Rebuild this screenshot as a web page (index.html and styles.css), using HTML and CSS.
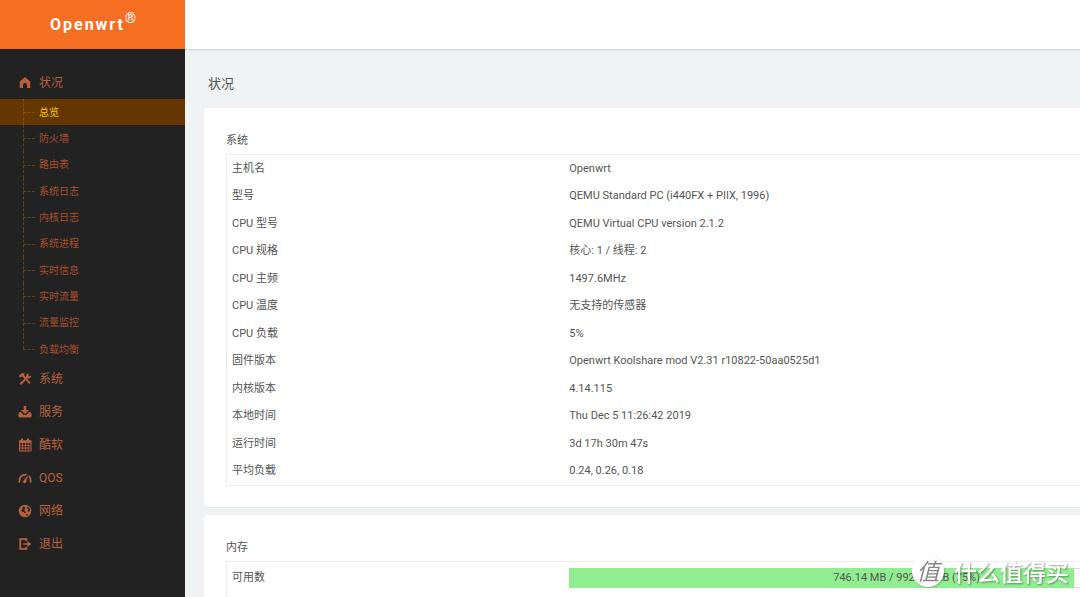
FILE: index.html
```html
<!DOCTYPE html>
<html lang="zh-CN">
<head>
<meta charset="utf-8">
<title>Openwrt - 总览</title>
<link rel="stylesheet" href="styles.css">
</head>
<body>
<div class="page">
  <aside class="sidebar">
    <a class="brand" href="#"><span>Openwrt</span><sup>®</sup></a>
    <nav class="nav">
      <a class="item" href="#"><svg viewBox="0 0 14 14"><path d="M7 1 12.200 5.600V12H9V9a2 2 0 0 0-4 0v3H1.800V5.600z"/></svg>状况</a>
      <ul class="sub">
        <li class="active"><a href="#">总览</a></li>
        <li><a href="#">防火墙</a></li>
        <li><a href="#">路由表</a></li>
        <li><a href="#">系统日志</a></li>
        <li><a href="#">内核日志</a></li>
        <li><a href="#">系统进程</a></li>
        <li><a href="#">实时信息</a></li>
        <li><a href="#">实时流量</a></li>
        <li><a href="#">流量监控</a></li>
        <li><a href="#">负载均衡</a></li>
      </ul>
      <a class="item" href="#"><svg viewBox="0 0 14 14"><path d="M.6 4.300 3.600 1.200h3.600L5.900 2.700l6.700 8.300-1.200 1.100L4.500 4.400 2.400 5.600z"/><path d="m1.500 11.600 6.700-6.400c-.5-1.900.7-3.700 2.700-3.600L10.200 3.200l1 1.200 2-.9c.2 2-1.500 3.300-3.500 2.800L3 13z"/></svg>系统</a>
      <a class="item" href="#"><svg viewBox="0 0 14 14"><path d="M5.700 1h2.600v4H11L7 9 3 5h2.700z"/><path d="M.5 8.500 2 7h1.200l2.100 2.700h3.400L10.800 7H12l1.500 1.500v3.200l-.8.800H1.300l-.8-.8z"/></svg>服务</a>
      <a class="item" href="#"><svg viewBox="0 0 14 14"><path fill-rule="evenodd" d="M3 .5h2v1.700h4V.5h2v1.700h2.500v11.300H1V2.200h2zM2.200 5v1.900h2V5zm2.900 0v1.900h1.800V5zm2.700 0v1.900h1.800V5zm2.700 0v1.900h2V5zM2.200 7.800v1.800h2V7.800zm2.900 0v1.800h1.800V7.800zm2.700 0v1.800h1.800V7.800zm2.700 0v1.800h2V7.800zM2.200 10.500v1.900h2v-1.900zm2.900 0v1.900h1.800v-1.900zm2.700 0v1.900h1.800v-1.900zm2.700 0v1.900h2v-1.900z"/></svg>酷软</a>
      <a class="item" href="#"><svg viewBox="0 0 14 14"><path fill="none" stroke="currentColor" stroke-width="1.800" d="M1.400 11.500C.8 6.500 3.500 3.400 8.500 3.600M11 5c1.600 1.800 1.900 4 1.500 6.500"/><path d="m10.300 3.800-2.100 7a1.600 1.600 0 1 1-2.500-1.400z"/></svg>QOS</a>
      <a class="item" href="#"><svg viewBox="0 0 14 14"><path fill-rule="evenodd" d="M7 .7a6.300 6.300 0 1 1 0 12.600A6.300 6.300 0 0 1 7 .7zM6 2.200 4.200 3.600l.6 1.600-1.600 1 .8 1.600 2 .2.600 1.600L8 8.200 6.600 6.600l-.8-.8 1.700-1.400zM9.600 2.600 8.800 4l1.400 1-.4 2 1.400 1 .9-1.700-.6-2.300zM8.500 10.500 7.800 12l1.700-.6.600-1.400z"/></svg>网络</a>
      <a class="item" href="#"><svg viewBox="0 0 14 14"><path fill="none" stroke="currentColor" stroke-width="1.800" d="M8.500 4.200V2.200H2.200v9.600h6.300V9.800"/><path d="M5.200 6.200h4.300V4L13.300 7 9.500 10V7.800H5.200z"/></svg>退出</a>
    </nav>
  </aside>
  <main class="main">
    <header class="topbar"></header>
    <div class="content">
      <h1 class="title">状况</h1>
      <section class="card">
        <h2 class="legend">系统</h2>
        <table class="info">
          <tr><th>主机名</th><td>Openwrt</td></tr>
          <tr><th>型号</th><td>QEMU Standard PC (i440FX + PIIX, 1996)</td></tr>
          <tr><th>CPU 型号</th><td>QEMU Virtual CPU version 2.1.2</td></tr>
          <tr><th>CPU 规格</th><td>核心: 1 / 线程: 2</td></tr>
          <tr><th>CPU 主频</th><td>1497.6MHz</td></tr>
          <tr><th>CPU 温度</th><td>无支持的传感器</td></tr>
          <tr><th>CPU 负载</th><td>5%</td></tr>
          <tr><th>固件版本</th><td>Openwrt Koolshare mod V2.31 r10822-50aa0525d1</td></tr>
          <tr><th>内核版本</th><td>4.14.115</td></tr>
          <tr><th>本地时间</th><td>Thu Dec 5 11:26:42 2019</td></tr>
          <tr><th>运行时间</th><td>3d 17h 30m 47s</td></tr>
          <tr><th>平均负载</th><td>0.24, 0.26, 0.18</td></tr>
        </table>
      </section>
      <section class="card">
        <h2 class="legend">内存</h2>
        <table class="info memory">
          <tr><th>可用数</th><td><div class="meter"><div class="fill" style="width:75%"></div><span class="value">746.14 MB / 992.45 MB (75%)</span></div></td></tr>
          <tr><th></th><td></td></tr>
        </table>
      </section>
    </div>
  </main>
</div>
<div class="watermark"><span class="seal">值</span><span>什么值得买</span></div>
</body>
</html>
```
FILE: styles.css
```css
* { box-sizing: border-box; }
html, body { height: 100%; }
body {
  margin: 0;
  overflow: hidden;
  background: #eff3f4;
  color: #555;
  font: 11px/20px Roboto, "Noto Sans CJK SC", sans-serif;
}
a { color: inherit; text-decoration: none; }
.page { display: flex; height: 100vh; overflow: hidden; }

.sidebar { flex: 0 0 185px; background: #222; color: #b5613e; }
.brand {
  display: flex;
  align-items: center;
  justify-content: center;
  height: 49px;
  padding-left: 3px;
  background: #f66e22;
  color: #fff;
  font-size: 16px;
  font-weight: 700;
  letter-spacing: 2px;
}
.brand sup { padding-bottom: 14px; font-size: 14px; font-weight: 400; line-height: 14px; vertical-align: baseline; }
.nav { padding-top: 17px; }
.item { display: flex; align-items: center; gap: 7px; height: 33px; padding-left: 18px; font-size: 12px; }
.item svg { width: 14px; height: 14px; fill: currentColor; }
.sub { margin: 0; padding: 0; list-style: none; font-size: 10px; color: #a74f2d; }
.sub li { position: relative; height: 26px; }
.sub li:nth-child(3n) { height: 27px; }
.sub a { display: flex; align-items: center; height: 100%; padding: 1px 0 0 39px; }
.sub .active { background: #663600; color: #f3cd00; }
.sub li::before {
  content: "";
  position: absolute;
  top: 0;
  bottom: 0;
  left: 23px;
  border-left: 1px dashed #68400f;
}
.sub li:last-child::before { bottom: 50%; }
.sub li::after {
  content: "";
  position: absolute;
  top: 50%;
  left: 23px;
  width: 12px;
  border-top: 1px dashed #68400f;
}
.sub .active::before, .sub .active::after { border-color: #875008; }

.main { flex: 1; min-width: 0; overflow: hidden; }
.topbar { position: relative; height: 49px; background: #fff; box-shadow: 0 1px 2px rgba(0, 0, 0, .15); }
.content { display: flex; flex-direction: column; gap: 8px; margin-right: -192px; padding: 25px 0 0 19px; }
.title { margin: 0; padding: 0 4px 6px; font-size: 13px; font-weight: 400; line-height: 20px; }
.card { padding: 22px 22px 21px; border-radius: 4px; background: #fff; box-shadow: 0 1px 1px rgba(0, 0, 0, .03); }
.legend { margin: 0 0 2px; font-size: 11px; font-weight: 400; line-height: 22px; }
.info { width: 100%; border: 1px solid #eee; border-spacing: 0; table-layout: fixed; }
.info tr { height: 27px; }
.info tr:nth-child(even) { height: 28px; }
.info th, .info td { padding: 0 5px; font-weight: 400; text-align: left; }
.info th { width: 33%; }
.info.memory tr { height: 32px; }
.meter { display: grid; height: 20px; border: 1px solid #ddd; }
.fill, .value { grid-area: 1 / 1; }
.fill { margin: -1px 0 -1px -1px; background: #90ee90; }
.value { text-align: center; line-height: 18px; }

.watermark {
  position: fixed;
  right: 11px;
  bottom: 10px;
  display: flex;
  align-items: center;
  gap: 10px;
  color: #fff;
  font: 500 23px/32px "Noto Sans CJK SC", sans-serif;
  text-shadow: 1px 1px 2px rgba(0, 0, 0, .4);
}
.seal {
  width: 32px;
  height: 32px;
  border-radius: 50%;
  background: #fff;
  color: #888;
  font-size: 23px;
  font-style: italic;
  font-weight: 400;
  line-height: 30px;
  text-align: center;
  text-shadow: none;
  box-shadow: 1px 1px 2px rgba(0, 0, 0, .2);
}
```
